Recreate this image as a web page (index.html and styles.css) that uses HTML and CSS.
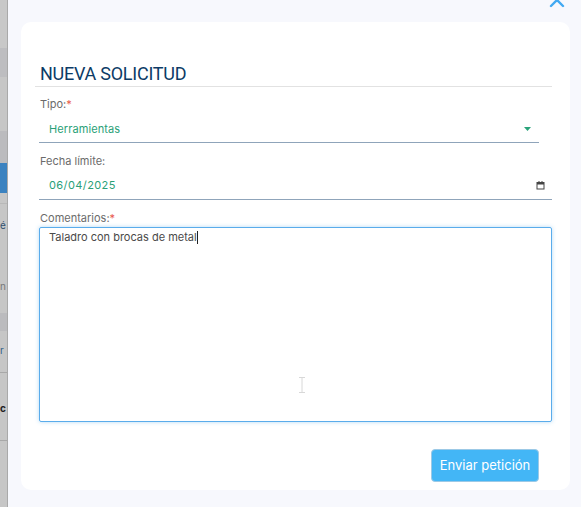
FILE: index.html
```html
<!DOCTYPE html>
<html lang="es">
<head>
<meta charset="utf-8">
<link rel="stylesheet" href="styles.css">
</head>
<body>
<div class="page">
  <div class="sidebar">
    <div class="band b1"></div>
    <div class="band b2"></div>
    <div class="band b3"></div>
    <div class="band b4"></div>
    <div class="band b5"></div>
    <div class="band b6"></div>
    <div class="band b7"><span class="frag">é</span></div>
    <div class="band b8"><span class="frag">n</span></div>
    <div class="band b9"></div>
    <div class="band b10"><span class="frag">r</span></div>
    <div class="band b11"><span class="frag">c</span></div>
    <div class="band b12"></div>
  </div>
  <div class="main">
    <svg class="close" width="16" height="10" viewBox="0 0 16 10"><path d="M2 -6 L14 6 M14 -6 L2 6" fill="none" stroke="#42a9f2" stroke-width="2.4" stroke-linecap="round"/></svg>
    <div class="card">
      <h1 class="title">NUEVA SOLICITUD</h1>
      <div class="form">
        <div class="field">
          <label class="label">Tipo:<span class="req">*</span></label>
          <div class="select">
            <span class="value">Herramientas</span>
            <svg class="caret" width="7" height="4" viewBox="0 0 7 4"><path d="M0 0 L7 0 L3.5 4 Z" fill="#2aa37a"/></svg>
          </div>
        </div>
        <div class="field">
          <label class="label">Fecha límite:</label>
          <div class="date">
            <span class="value">06/04/2025</span>
            <svg class="cal" width="9" height="9" viewBox="0 0 9 9"><rect x="1" y="1.5" width="7" height="6.5" fill="none" stroke="#444" stroke-width="1"/><rect x="1" y="1.5" width="7" height="2" fill="#444"/><rect x="2.5" y="0" width="1" height="2" fill="#444"/><rect x="5.5" y="0" width="1" height="2" fill="#444"/></svg>
          </div>
        </div>
        <div class="field">
          <label class="label">Comentarios:<span class="req">*</span></label>
          <div class="textarea"><span class="text">Taladro con brocas de metal</span><span class="caret-line"></span></div>
        </div>
        <div class="actions">
          <button class="btn">Enviar petición</button>
        </div>
      </div>
      <svg class="ibeam" width="8" height="16" viewBox="0 0 8 16"><path d="M1 0.5 H7 M4 0.5 V15.5 M1 15.5 H7" fill="none" stroke="#d8d8d8" stroke-width="1"/></svg>
    </div>
  </div>
</div>
</body>
</html>
```

FILE: styles.css
```css
* { box-sizing: border-box; }
html, body { margin: 0; padding: 0; }
body {
  width: 581px;
  height: 507px;
  overflow: hidden;
  background: #f7f8fd;
  font-family: Inter, "Noto Sans", "Liberation Sans", sans-serif;
}
.page {
  display: flex;
  height: 507px;
}
.sidebar {
  width: 8px;
  flex: none;
  display: flex;
  flex-direction: column;
  border-right: 1px solid #a9a9a9;
  background: #c6c6c6;
  overflow: hidden;
}
.band { flex: none; position: relative; }
.b1 { height: 48px; background: #c8c8c8; }
.b2 { height: 29px; background: #bdbdc0; }
.b3 { height: 54px; background: #c6c6c6; }
.b4 { height: 32px; background: #bbbbbe; }
.b5 { height: 30px; background: #3b82c0; }
.b6 { height: 10px; background: #c6c6c6; }
.b7 { height: 60px; background: #c6c6c6; border-top: 1px solid #b8b8b8; }
.b8 { height: 50px; background: #c6c6c6; }
.b9 { height: 18px; background: #bbbbbe; }
.b10 { height: 42px; background: #c6c6c6; border-bottom: 1px solid #a8a8a8; }
.b11 { height: 68px; background: #c6c6c6; border-bottom: 1px solid #a8a8a8; }
.b12 { height: 70px; background: #c6c6c6; }
.frag {
  position: absolute;
  left: 0;
  font-size: 10px;
  color: #2f4f6f;
  line-height: 1;
}
.b7 .frag { top: 16px; }
.b8 .frag { top: 18px; color: #777; }
.b10 .frag { top: 14px; color: #2f5f86; }
.b11 .frag { top: 30px; color: #222; font-weight: 700; }
.main {
  flex: 1;
  position: relative;
  padding: 22px 11px 17px 13px;
}
.close {
  position: absolute;
  left: 541px;
  top: 0;
}
.card {
  position: relative;
  width: 549px;
  height: 468px;
  background: #ffffff;
  border-radius: 10px;
  padding: 39px 18px 0 14px;
}
.title {
  margin: 0;
  padding: 0 0 1px 5px;
  height: 26px;
  font-size: 18px;
  font-weight: 400;
  letter-spacing: -0.25px;
  line-height: 26px;
  color: #0c3b66;
  border-bottom: 1px solid #e2e2e2;
  font-family: Roboto, "Noto Sans", sans-serif;
}
.form {
  padding: 10px 0 0 4px;
  display: flex;
  flex-direction: column;
}
.field { display: flex; flex-direction: column; }
.label {
  font-size: 11px;
  line-height: 14px;
  color: #6b6b6b;
  padding-left: 1px;
}
.req { color: #e8574a; }
.select, .date {
  position: relative;
  display: flex;
  align-items: center;
  justify-content: space-between;
  height: 32px;
  padding: 4px 8px 0 10px;
  border-bottom: 1.5px solid #8fa4ba;
  margin-bottom: 11px;
}
.select { width: 500px; }
.date { width: 513px; padding-right: 7px; padding-top: 3px; }
.value {
  font-size: 11px;
  color: #2a9f78;
  letter-spacing: 0.1px;
}
.date .value { letter-spacing: 0.4px; }
.caret { margin-top: 1px; }
.textarea {
  margin-top: 2px;
  width: 513px;
  height: 195px;
  border: 1.5px solid #5aaceb;
  border-radius: 2px;
  box-shadow: 0 0 4px rgba(90, 172, 235, 0.45);
  padding: 2px 9px;
  font-size: 11px;
  line-height: 15px;
  color: #4a4a4a;
  display: flex;
  align-items: flex-start;
}
.caret-line {
  display: inline-block;
  width: 1px;
  height: 13px;
  margin-top: 1px;
  background: #222;
}
.actions {
  display: flex;
  justify-content: flex-end;
  padding: 27px 13px 0 0;
}
.btn {
  width: 108px;
  height: 33px;
  border: 1px solid #9cc9e6;
  border-radius: 4px;
  background: #43b6f6;
  color: #ffffff;
  font-family: Inter, "Noto Sans", sans-serif;
  font-size: 13px;
  padding: 0 0 2px 0;
}
.ibeam {
  position: absolute;
  left: 277px;
  top: 355px;
}
```
